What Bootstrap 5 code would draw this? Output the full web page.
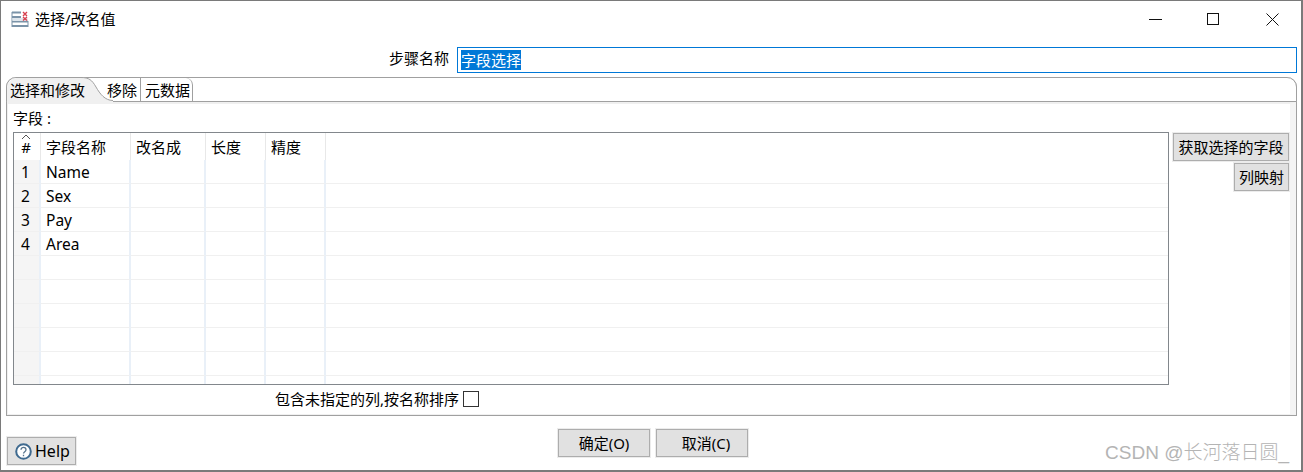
<!DOCTYPE html>
<html lang="zh-CN">
<head>
<meta charset="utf-8">
<title>选择/改名值</title>
<link href="https://cdn.jsdelivr.net/npm/bootstrap@5.3.0/dist/css/bootstrap.min.css" rel="stylesheet">
<style>
html,body{height:100%;margin:0;background:#fff;overflow:hidden}
body{font-family:"Noto Sans","Noto Sans CJK SC",sans-serif;font-size:15px;line-height:20px;color:#000}
.win{height:472px;border:1px solid #7a7a7a;border-width:1px 2px 2px 1px;display:flex;flex-direction:column;position:relative}
.titlebar{height:37px;padding-left:10px;flex:none}
.titlebar .ttl{margin-left:6px;padding-bottom:2px}
.winbtns{margin-left:auto;display:flex;padding-right:22px;gap:45px}
.winbtns svg{display:block}
.winbtns .mx{margin-right:1px}
.step{height:26px;margin:9px 4px 0 0;display:flex;justify-content:flex-end;align-items:center;flex:none}
.step label{margin-right:8px;padding-bottom:4px}
.stepinp{width:840px;height:26px;border:1px solid #0078d7;padding:0 3px;display:flex;align-items:center;background:#fff}
.stepinp span{background:#0078d7;color:#fff;line-height:20px;display:block}
.folder{margin:4px 4px 0 5px;height:339px;border:1px solid #a0a0a0;border-top:0;border-radius:10px 10px 0 0;flex:none;display:flex;flex-direction:column;background:#fff}
.tabsrow{height:25px;flex:none;display:flex;border:1px solid #a0a0a0;margin:0 -1px;border-radius:10px 10px 0 0;position:relative;background:#fff}
.tb{line-height:24px;height:23px;white-space:nowrap}
.tb1{width:74px;height:24px;margin-bottom:-1px;padding-left:3px;background:#f0f0f0;border-radius:10px 0 0 0;position:relative;z-index:1}
.curve{width:32px;height:25px;flex:none;display:block;margin:-1px -6px -1px 0}
.tb2{width:33px;position:relative}
.tb3{width:53px;padding-left:4px;border-left:1px solid #a0a0a0;border-right:1px solid #a0a0a0;border-radius:0 7px 0 0;position:relative}
.pane{flex:1;border:2px solid #f0f0f0;border-bottom-width:1px;padding:4px 6px 0 5px;min-height:0;display:flex;flex-direction:column;border-right-width:6px;border-left-width:1px;border-right-color:#f4f4f4}
.lblf{height:22px;line-height:16px;margin-top:2px}
.tblrow{display:flex;gap:4px;align-items:flex-start}
.gridbox{width:1156px;height:253px;border:1px solid #82878c;overflow:hidden;flex:none}
.gridtbl{table-layout:fixed;width:1155px;margin:0;border-collapse:separate;border-spacing:0;--bs-table-bg:transparent;color:#000}
.gridtbl th,.gridtbl td{padding:1px 0 0 5px;font-weight:400;height:24px;line-height:22px;font-size:15.5px;border-bottom:1px solid #f0f0f0;border-right:2px solid #e9f0f8;box-shadow:none;white-space:nowrap;color:#000;vertical-align:top}
.gridtbl th{height:27px;padding-top:2px;line-height:25px;font-size:15px;border-bottom:0;border-right:1px solid #e8e8e8;overflow:visible}
.gridtbl td.num,.gridtbl th.num{text-align:center;padding-right:2px;padding-left:0;background:#f5f5f5;border-right:2px solid #e9f0f8;position:relative}
.gridtbl th.num{background:#fff;border-right:1px solid #e8e8e8}
.gridtbl td:last-child,.gridtbl th:last-child{border-right:0}
.sortup{position:absolute;left:7px;top:1px;display:block}
.sidebtns{display:flex;flex-direction:column;align-items:flex-end;gap:2px;width:116px;flex:none;margin-top:1px}
.swtbtn{--bs-btn-padding-y:0;--bs-btn-padding-x:0;--bs-btn-font-size:15px;--bs-btn-border-radius:0;--bs-btn-color:#000;--bs-btn-bg:#e1e1e1;--bs-btn-border-color:#adadad;--bs-btn-hover-bg:#e1e1e1;--bs-btn-hover-color:#000;--bs-btn-hover-border-color:#adadad;height:28px;line-height:26px;outline:1px solid #ececec;font-family:inherit}
.b1{width:116px}.b2{width:55px}
.chkrow{display:flex;align-items:center;height:28px;padding-left:262px}
.chkbox{width:16px;height:16px;margin:0 0 0 4px;border:1px solid #333;background:#fff;flex:none}
.footer{flex:1;position:relative;min-height:0}
.footrow{height:100%;display:flex;padding:13px 0 0 6px;align-items:flex-start}
.helpb{--bs-btn-font-size:16px;width:69px;margin-top:8px;padding:0 0 0 7px;display:flex;align-items:center;gap:3px}
.okb{width:92px;margin-left:482px}
.ccb{width:92px;margin-left:6px;padding-left:8px}
.wm{margin-left:auto;margin-right:12px;margin-top:11px;color:#b4b4b4;font-size:19px;line-height:26px;white-space:nowrap;font-family:"Liberation Sans","Noto Sans CJK SC",sans-serif;font-weight:300}
</style>
</head>
<body>
<div class="win">
  <div class="titlebar d-flex align-items-center">
    <svg width="18" height="17" viewBox="0 0 18 17" fill="none"><path d="M1 1.500h9M1 6h9M1 10.500h16M1 15h16" stroke="#7b93a8" stroke-width="2"/><path d="M1 1v15M17 10v6" stroke="#7b93a8"/><rect x="1.500" y="7" width="15" height="3" fill="#dfe6ec"/><path d="M12 1l4 4M16 1l-4 4M12 6l4 3.500M16 6l-4 3.500" stroke="#d8404f" stroke-width="1.400"/></svg>
    <span class="ttl">选择/改名值</span>
    <div class="winbtns">
      <svg width="13" height="13" viewBox="0 0 13 13"><path d="M0 6.500h13" stroke="#111"/></svg>
      <svg class="mx" width="13" height="13" viewBox="0 0 13 13"><rect x=".5" y=".5" width="11" height="11" fill="none" stroke="#111"/></svg>
      <svg width="13" height="13" viewBox="0 0 13 13"><path d="M.5.5l12 12M12.500.5l-12 12" stroke="#111"/></svg>
    </div>
  </div>
  <div class="step">
    <label>步骤名称</label>
    <div class="stepinp"><span>字段选择</span></div>
  </div>
  <div class="folder">
    <div class="tabsrow">
      <div class="tb tb1">选择和修改</div>
      <svg class="curve" viewBox="0 0 32 25"><path d="M0 .5C8 .5 11 3 15 10S24 23.500 32 23.500V25H0z" fill="#f0f0f0"/><path d="M0 .5C8 .5 11 3 15 10S24 23.500 32 23.500" fill="none" stroke="#a0a0a0"/></svg>
      <div class="tb tb2">移除</div>
      <div class="tb tb3">元数据</div>
    </div>
    <div class="pane">
      <div class="lblf">字段 :</div>
      <div class="tblrow">
        <div class="gridbox">
          <table class="table gridtbl">
            <colgroup><col style="width:27px"><col style="width:90px"><col style="width:75px"><col style="width:60px"><col style="width:60px"><col></colgroup>
            <thead><tr><th class="num"><svg class="sortup" width="10" height="6" viewBox="0 0 10 6"><path d="M1 5l4-4 4 4" fill="none" stroke="#555"/></svg>#</th><th>字段名称</th><th>改名成</th><th>长度</th><th>精度</th><th></th></tr></thead>
            <tbody>
              <tr><td class="num">1</td><td>Name</td><td></td><td></td><td></td><td></td></tr>
              <tr><td class="num">2</td><td>Sex</td><td></td><td></td><td></td><td></td></tr>
              <tr><td class="num">3</td><td>Pay</td><td></td><td></td><td></td><td></td></tr>
              <tr><td class="num">4</td><td>Area</td><td></td><td></td><td></td><td></td></tr>
              <tr><td class="num"></td><td></td><td></td><td></td><td></td><td></td></tr>
              <tr><td class="num"></td><td></td><td></td><td></td><td></td><td></td></tr>
              <tr><td class="num"></td><td></td><td></td><td></td><td></td><td></td></tr>
              <tr><td class="num"></td><td></td><td></td><td></td><td></td><td></td></tr>
              <tr><td class="num"></td><td></td><td></td><td></td><td></td><td></td></tr>
              <tr><td class="num"></td><td></td><td></td><td></td><td></td><td></td></tr>
            </tbody>
          </table>
        </div>
        <div class="sidebtns">
          <button type="button" class="btn swtbtn b1">获取选择的字段</button>
          <button type="button" class="btn swtbtn b2">列映射</button>
        </div>
      </div>
      <div class="chkrow"><span>包含未指定的列,按名称排序</span><span class="chkbox"></span></div>
    </div>
  </div>
  <div class="footer">
    <div class="footrow">
      <button type="button" class="btn swtbtn helpb"><svg width="17" height="17" viewBox="0 0 17 17"><circle cx="8.500" cy="8.500" r="7.300" fill="#fff" stroke="#3f6a8f" stroke-width="2"/><path d="M6 6.800c0-3.200 5-3.200 5 0 0 2-2.500 1.800-2.500 3.800M8.500 11.800v1.500" fill="none" stroke="#55738c" stroke-width="1.300"/></svg>Help</button>
      <button type="button" class="btn swtbtn okb">确定(O)</button>
      <button type="button" class="btn swtbtn ccb">取消(C)</button>
      <div class="wm">CSDN @长河落日圆_</div>
    </div>
  </div>
</div>
<script src="https://cdn.jsdelivr.net/npm/bootstrap@5.3.0/dist/js/bootstrap.bundle.min.js"></script>
</body>
</html>
